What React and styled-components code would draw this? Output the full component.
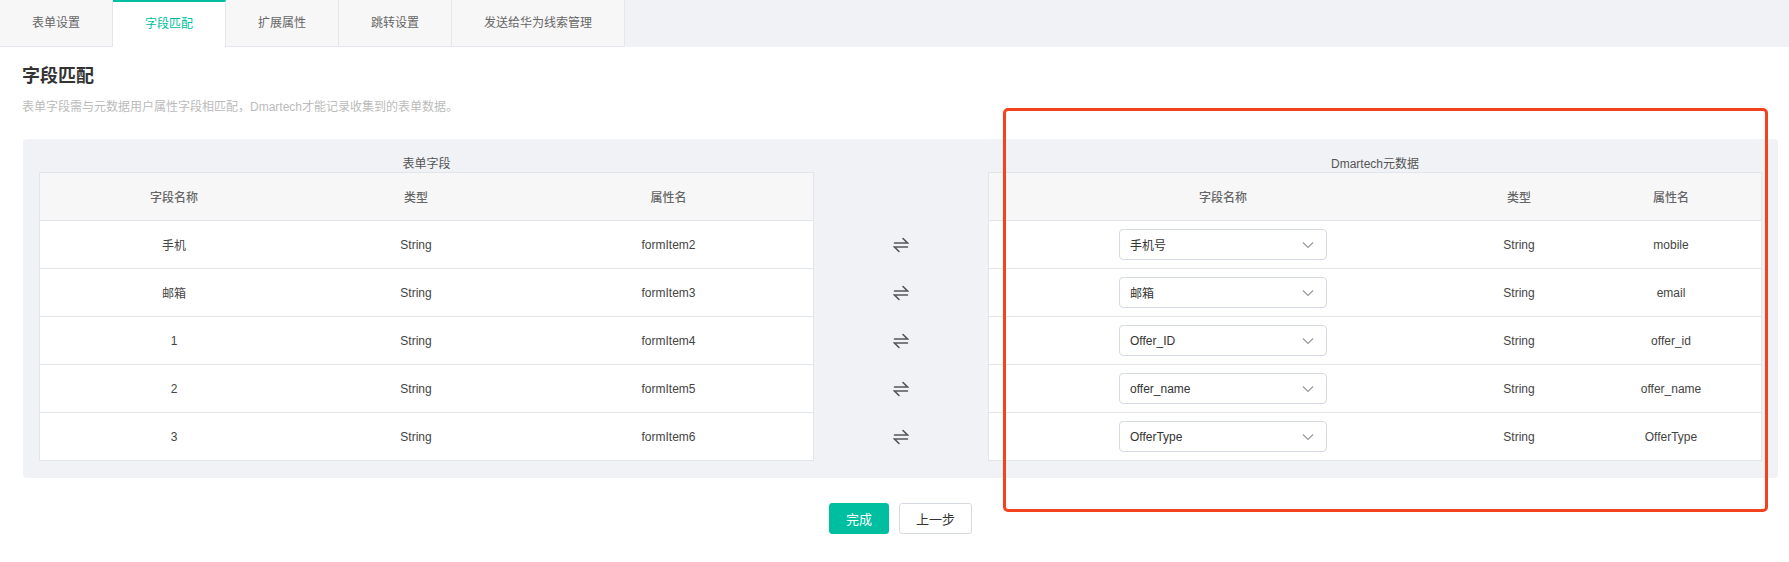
import React from 'react'
import styled, { createGlobalStyle } from 'styled-components'

const GlobalStyle = createGlobalStyle`
  body {
    margin: 0;
    background: #fff;
    font-family: 'Liberation Sans', 'Noto Sans CJK SC', sans-serif;
    color: #333;
  }
`

const tabs = ['表单设置', '字段匹配', '扩展属性', '跳转设置', '发送给华为线索管理']

const formFields = [
  { name: '手机', type: 'String', attr: 'formItem2' },
  { name: '邮箱', type: 'String', attr: 'formItem3' },
  { name: '1', type: 'String', attr: 'formItem4' },
  { name: '2', type: 'String', attr: 'formItem5' },
  { name: '3', type: 'String', attr: 'formItem6' },
]

const metaFields = [
  { name: '手机号', type: 'String', attr: 'mobile' },
  { name: '邮箱', type: 'String', attr: 'email' },
  { name: 'Offer_ID', type: 'String', attr: 'offer_id' },
  { name: 'offer_name', type: 'String', attr: 'offer_name' },
  { name: 'OfferType', type: 'String', attr: 'OfferType' },
]

const SwapIcon = () => (
  <svg width="16" height="16" viewBox="0 0 16 16" fill="none" stroke="#555" strokeWidth="1.6" strokeLinecap="round">
    <path d="M1.5 6h13L10 1.5" />
    <path d="M14.5 10h-13L6 14.5" />
  </svg>
)

const Chevron = () => (
  <svg width="12" height="8" viewBox="0 0 12 8" fill="none" stroke="#999" strokeWidth="1.2">
    <path d="M1 1.5l5 5 5-5" />
  </svg>
)

const App = () => (
  <Page>
    <GlobalStyle />
    <TabBar>
      {tabs.map((t, i) => (
        <Tab key={t} active={i === 1}>{t}</Tab>
      ))}
    </TabBar>
    <Content>
      <Title>字段匹配</Title>
      <Desc>表单字段需与元数据用户属性字段相匹配，Dmartech才能记录收集到的表单数据。</Desc>
      <Panel>
        <Group>
          <GroupLabel>表单字段</GroupLabel>
          <Table>
            <Row cols="268px 216px 1fr" head>
              <Cell>字段名称</Cell>
              <Cell>类型</Cell>
              <Cell>属性名</Cell>
            </Row>
            {formFields.map((f) => (
              <Row cols="268px 216px 1fr" key={f.attr}>
                <Cell>{f.name}</Cell>
                <Cell>{f.type}</Cell>
                <Cell>{f.attr}</Cell>
              </Row>
            ))}
          </Table>
        </Group>
        <ArrowColumn>
          {formFields.map((f) => (
            <ArrowCell key={f.attr}>
              <SwapIcon />
            </ArrowCell>
          ))}
        </ArrowColumn>
        <Group>
          <GroupLabel>Dmartech元数据</GroupLabel>
          <Table>
            <Row cols="468px 124px 1fr" head>
              <Cell>字段名称</Cell>
              <Cell>类型</Cell>
              <Cell>属性名</Cell>
            </Row>
            {metaFields.map((f) => (
              <Row cols="468px 124px 1fr" key={f.attr}>
                <Cell>
                  <Select>
                    <span>{f.name}</span>
                    <Chevron />
                  </Select>
                </Cell>
                <Cell>{f.type}</Cell>
                <Cell>{f.attr}</Cell>
              </Row>
            ))}
          </Table>
        </Group>
      </Panel>
      <Footer>
        <Button primary>完成</Button>
        <Button>上一步</Button>
      </Footer>
    </Content>
    <Highlight />
  </Page>
)

export default App

const Page = styled.div`
  position: relative;
  min-height: 562px;
`

const TabBar = styled.div`
  display: flex;
  height: 47px;
  background: #f0f2f5;
`

const Tab = styled.div`
  box-sizing: border-box;
  height: 47px;
  padding: 0 32px;
  font-size: 12px;
  line-height: ${(p) => (p.active ? '45px' : '46px')};
  color: ${(p) => (p.active ? '#00bfa1' : '#666')};
  background: ${(p) => (p.active ? '#fff' : '#f7f7f7')};
  border-top: ${(p) => (p.active ? '2px solid #00bfa1' : 'none')};
  border-right: 1px solid #e4e8ee;
  border-bottom: ${(p) => (p.active ? 'none' : '1px solid #e4e8ee')};
  white-space: nowrap;
`

const Content = styled.div`
  padding: 17px 11px 0 23px;
`

const Title = styled.h2`
  margin: 0;
  font-size: 18px;
  line-height: 24px;
  font-weight: bold;
  color: #333;
  margin-left: -1px;
`

const Desc = styled.p`
  margin: 11px 0 0 -1px;
  font-size: 12px;
  line-height: 16px;
  color: #bbb;
`

const Panel = styled.div`
  display: grid;
  grid-template-columns: 775px 1fr 774px;
  margin-top: 24px;
  padding: 0 16px 17px;
  background: #f0f2f5;
  border-radius: 4px;
`

const Group = styled.div`
  display: flex;
  flex-direction: column;
`

const GroupLabel = styled.div`
  padding-top: 18px;
  height: 15px;
  font-size: 12px;
  line-height: 15px;
  text-align: center;
  color: #555;
`

const Table = styled.div`
  border: 1px solid #e2e5ea;
  border-bottom: none;
  background: #fff;
`

const Row = styled.div`
  display: grid;
  grid-template-columns: ${(p) => p.cols};
  box-sizing: border-box;
  height: 48px;
  border-bottom: 1px solid #e2e5ea;
  background: ${(p) => (p.head ? '#f7f7f8' : '#fff')};
  color: ${(p) => (p.head ? '#666' : '#444')};
  font-weight: ${(p) => (p.head ? 500 : 'normal')};
`

const Cell = styled.div`
  display: flex;
  align-items: center;
  justify-content: center;
  font-size: 12px;
`

const ArrowColumn = styled.div`
  display: flex;
  flex-direction: column;
  padding-top: 82px;
`

const ArrowCell = styled.div`
  display: flex;
  align-items: center;
  justify-content: center;
  height: 48px;
`

const Select = styled.div`
  display: flex;
  align-items: center;
  justify-content: space-between;
  box-sizing: border-box;
  width: 208px;
  height: 31px;
  padding: 0 12px 0 10px;
  border: 1px solid #d5d9e2;
  border-radius: 4px;
  background: #fff;
  font-size: 12px;
  color: #333;
`

const Footer = styled.div`
  display: flex;
  justify-content: center;
  gap: 10px;
  margin-top: 25px;
`

const Button = styled.button`
  box-sizing: border-box;
  height: 31px;
  padding: 0 16px;
  border-radius: 3px;
  font-family: inherit;
  font-size: 13px;
  cursor: pointer;
  color: ${(p) => (p.primary ? '#fff' : '#333')};
  background: ${(p) => (p.primary ? '#00bfa1' : '#fff')};
  border: 1px solid ${(p) => (p.primary ? '#00bfa1' : '#d5d9e2')};
`

const Highlight = styled.div`
  position: absolute;
  left: 1003px;
  top: 108px;
  width: 765px;
  height: 404px;
  box-sizing: border-box;
  border: 3px solid #f4421f;
  border-radius: 5px;
  pointer-events: none;
`
